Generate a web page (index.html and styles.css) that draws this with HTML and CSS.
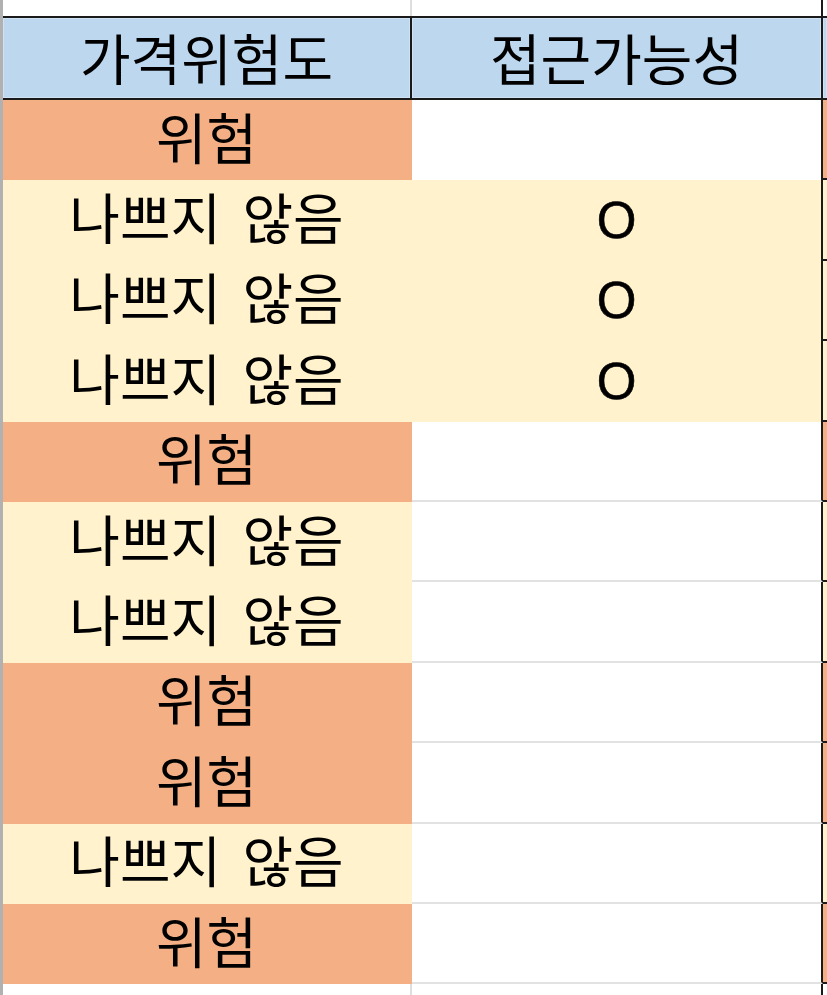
FILE: index.html
```html
<!DOCTYPE html>
<html lang="ko">
<head>
<meta charset="utf-8">
<title>가격위험도</title>
<link rel="stylesheet" href="styles.css">
</head>
<body>
<div class="sheet">
  <div class="edge"></div>
  <div class="grid">
    <div class="row row-top">
      <div class="cell c-a line-soft"></div>
      <div class="cell c-b"></div>
      <div class="cell c-c"></div>
    </div>
    <div class="row row-head">
      <div class="cell c-a head line-hard">가격위험도</div>
      <div class="cell c-b head">접근가능성</div>
      <div class="cell c-c head"></div>
    </div>
    <div class="row row-data">
      <div class="cell c-a risk">위험</div>
      <div class="cell c-b"></div>
      <div class="cell c-c risk"></div>
    </div>
    <div class="row row-data">
      <div class="cell c-a ok">나쁘지 않음</div>
      <div class="cell c-b ok mark">O</div>
      <div class="cell c-c ok"></div>
    </div>
    <div class="row row-data">
      <div class="cell c-a ok">나쁘지 않음</div>
      <div class="cell c-b ok mark">O</div>
      <div class="cell c-c ok"></div>
    </div>
    <div class="row row-data">
      <div class="cell c-a ok">나쁘지 않음</div>
      <div class="cell c-b ok mark">O</div>
      <div class="cell c-c ok"></div>
    </div>
    <div class="row row-data">
      <div class="cell c-a risk">위험</div>
      <div class="cell c-b grid-line"></div>
      <div class="cell c-c risk"></div>
    </div>
    <div class="row row-data">
      <div class="cell c-a ok">나쁘지 않음</div>
      <div class="cell c-b grid-line"></div>
      <div class="cell c-c ok"></div>
    </div>
    <div class="row row-data">
      <div class="cell c-a ok">나쁘지 않음</div>
      <div class="cell c-b grid-line"></div>
      <div class="cell c-c ok"></div>
    </div>
    <div class="row row-data">
      <div class="cell c-a risk">위험</div>
      <div class="cell c-b grid-line"></div>
      <div class="cell c-c risk"></div>
    </div>
    <div class="row row-data">
      <div class="cell c-a risk">위험</div>
      <div class="cell c-b grid-line"></div>
      <div class="cell c-c risk"></div>
    </div>
    <div class="row row-data">
      <div class="cell c-a ok">나쁘지 않음</div>
      <div class="cell c-b grid-line"></div>
      <div class="cell c-c ok"></div>
    </div>
    <div class="row row-data">
      <div class="cell c-a risk">위험</div>
      <div class="cell c-b grid-line"></div>
      <div class="cell c-c risk"></div>
    </div>
    <div class="row row-bottom">
      <div class="cell c-a line-soft"></div>
      <div class="cell c-b"></div>
      <div class="cell c-c"></div>
    </div>
  </div>
</div>
</body>
</html>
```

FILE: styles.css
```css
html, body {
  margin: 0;
  padding: 0;
  background: #ffffff;
}

body {
  width: 827px;
  height: 995px;
  overflow: hidden;
  font-family: "Noto Sans CJK KR", "Noto Sans", sans-serif;
  color: #000000;
}

.sheet {
  display: flex;
  height: 995px;
}

.edge {
  flex: none;
  width: 3px;
  background: #b1b1b1;
}

.grid {
  flex: 1;
  display: flex;
  flex-direction: column;
  min-width: 0;
}

.row {
  display: flex;
  flex: none;
}

.row-top {
  height: 16px;
}

.row-head {
  height: 84px;
  box-sizing: border-box;
  border-top: 2px solid #1a1a1a;
  border-bottom: 2px solid #1a1a1a;
}

.row-data {
  height: 80.4px;
}

.row-bottom {
  flex: 1;
}

.cell {
  box-sizing: border-box;
  display: flex;
  align-items: center;
  justify-content: center;
  font-size: 55px;
  line-height: 1;
  white-space: pre;
  word-spacing: 6px;
  padding-bottom: 10px;
}

.c-a {
  flex: none;
  width: 409px;
  border-right: 2px solid transparent;
}

.c-b {
  flex: none;
  width: 411px;
  border-right: 2px solid #1a1a1a;
}

.c-c {
  flex: 1;
}

.line-soft {
  border-right-color: #dedede;
}

.line-hard {
  border-right-color: #1a1a1a;
}

.head {
  background: #bdd7ee;
  box-shadow: inset 0 0 0 1px #cfe1f2;
  padding-bottom: 4px;
}

.risk {
  background: #f4b084;
}

.ok {
  background: #fff2cc;
}

.mark {
  font-family: "Liberation Sans", Arial, sans-serif;
  font-size: 51px;
  padding-bottom: 0;
  -webkit-text-stroke: 0.6px #000000;
}

.grid-line {
  border-bottom: 2px solid #e2e2e2;
}

.c-c.risk,
.c-c.ok {
  border-bottom: 2px solid #1a1a1a;
}
```
